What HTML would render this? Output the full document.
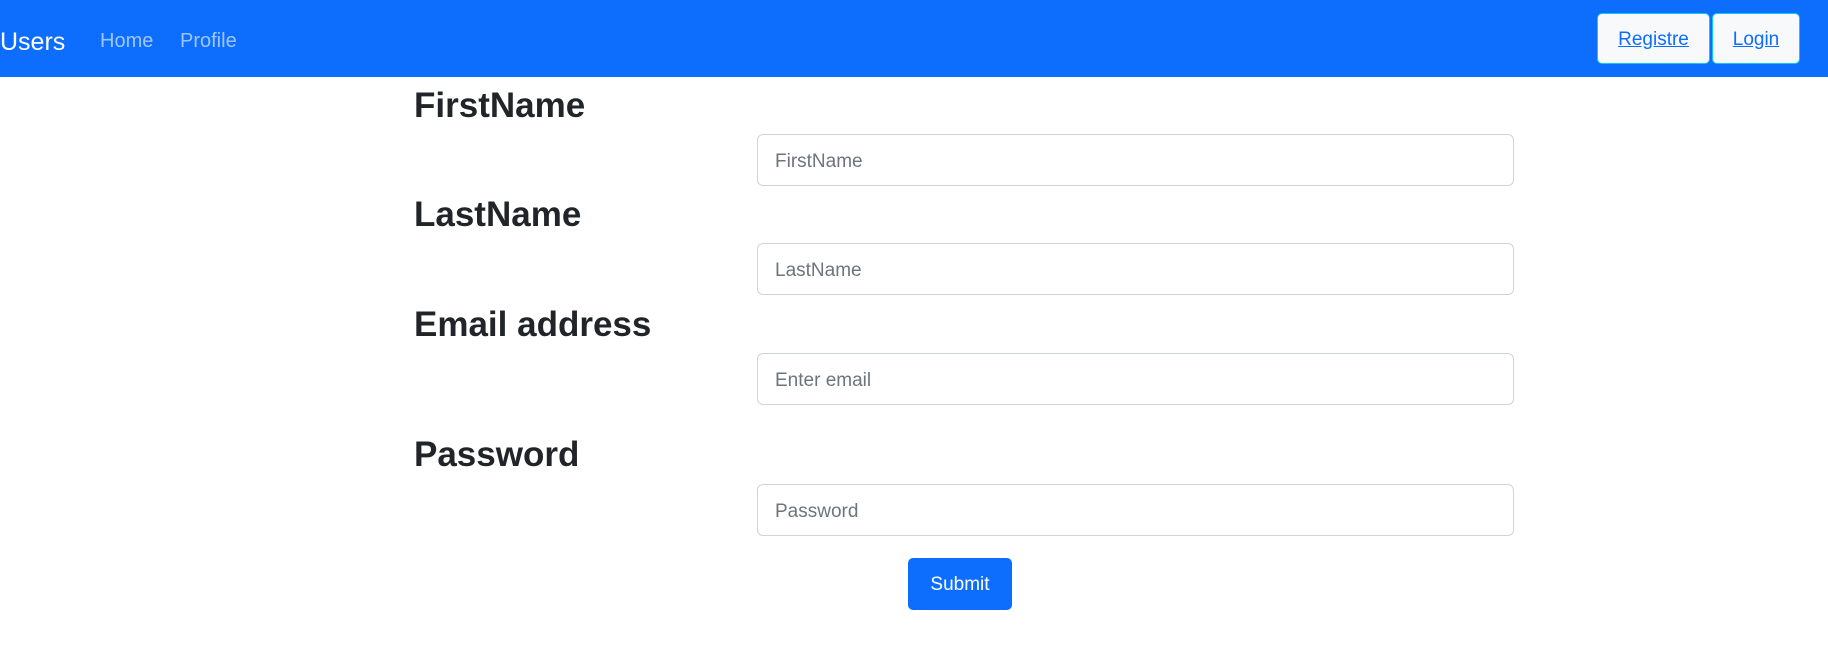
<!DOCTYPE html>
<html><head><meta charset="utf-8"><style>
*{box-sizing:border-box;margin:0;padding:0}
body{width:1828px;height:654px;background:#fff;font-family:"Liberation Sans",sans-serif;position:relative;overflow:hidden}
.nav{position:absolute;left:0;top:0;width:1828px;height:77px;background:#0d6efd}
.a{position:absolute;line-height:1;white-space:nowrap}
.lbl{font-size:35px;font-weight:bold;color:#212529;left:414px}
.inp{position:absolute;left:757px;width:757px;height:52px;border:1px solid #ced4da;border-radius:6px;background:#fff}
.inp span{position:absolute;left:17px;top:17px;font-size:19px;color:#6c757d;line-height:1}
.btn{position:absolute;top:13px;height:51px;background:#f8f9fa;border:1px solid #0dcaf0;border-radius:5px;color:#0d6efd;font-size:19px;text-decoration:underline;text-align:center;line-height:52px}
</style></head><body>
<div class="nav">
<div class="a" style="left:0;top:30px;font-size:25px;color:#fff">Users</div>
<div class="a" style="left:100px;top:31px;font-size:20px;color:rgba(255,255,255,.6)">Home</div>
<div class="a" style="left:180px;top:31px;font-size:20px;color:rgba(255,255,255,.6)">Profile</div>
<div class="btn" style="left:1597px;width:113px">Registre</div>
<div class="btn" style="left:1712px;width:88px">Login</div>
</div>
<div class="a lbl" style="top:88px">FirstName</div>
<div class="inp" style="top:134px"><span>FirstName</span></div>
<div class="a lbl" style="top:197px">LastName</div>
<div class="inp" style="top:243px"><span>LastName</span></div>
<div class="a lbl" style="top:307px">Email address</div>
<div class="inp" style="top:353px"><span>Enter email</span></div>
<div class="a lbl" style="top:437px">Password</div>
<div class="inp" style="top:484px"><span>Password</span></div>
<div style="position:absolute;left:908px;top:558px;width:104px;height:52px;background:#0d6efd;border-radius:5px;color:#fff;font-size:19px;text-align:center;line-height:54px">Submit</div>
</body></html>
